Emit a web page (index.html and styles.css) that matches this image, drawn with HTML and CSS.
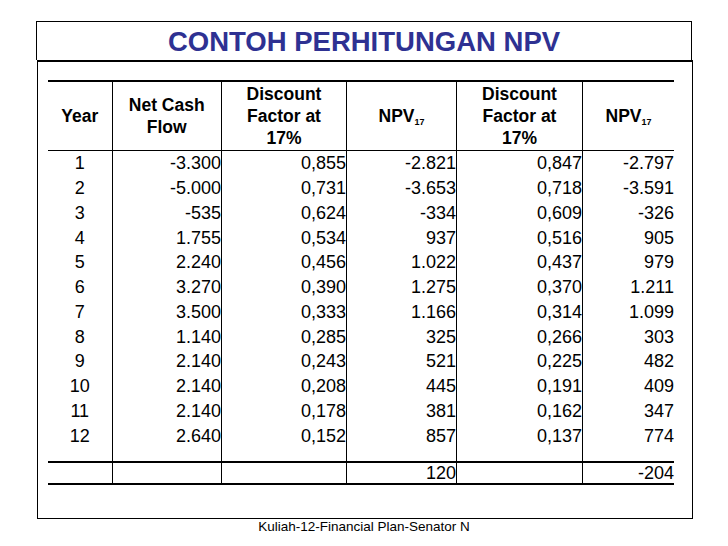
FILE: index.html
```html
<!DOCTYPE html>
<html>
<head>
<meta charset="utf-8">
<link rel="stylesheet" href="styles.css">
</head>
<body>
<div class="slide">
  <div class="title-box"><h1 class="title">CONTOH PERHITUNGAN NPV</h1></div>
  <div class="content-box">
    <table class="npv">
      <colgroup>
        <col class="c-year"><col class="c-cash"><col class="c-df"><col class="c-npv"><col class="c-df2"><col class="c-npv2">
      </colgroup>
      <thead>
        <tr>
          <th>Year</th>
          <th>Net Cash<br>Flow</th>
          <th>Discount<br>Factor at<br>17%</th>
          <th>NPV<sub>17</sub></th>
          <th>Discount<br>Factor at<br>17%</th>
          <th>NPV<sub>17</sub></th>
        </tr>
      </thead>
      <tbody>
        <tr><td>1</td><td>-3.300</td><td>0,855</td><td>-2.821</td><td>0,847</td><td>-2.797</td></tr>
        <tr><td>2</td><td>-5.000</td><td>0,731</td><td>-3.653</td><td>0,718</td><td>-3.591</td></tr>
        <tr><td>3</td><td>-535</td><td>0,624</td><td>-334</td><td>0,609</td><td>-326</td></tr>
        <tr><td>4</td><td>1.755</td><td>0,534</td><td>937</td><td>0,516</td><td>905</td></tr>
        <tr><td>5</td><td>2.240</td><td>0,456</td><td>1.022</td><td>0,437</td><td>979</td></tr>
        <tr><td>6</td><td>3.270</td><td>0,390</td><td>1.275</td><td>0,370</td><td>1.211</td></tr>
        <tr><td>7</td><td>3.500</td><td>0,333</td><td>1.166</td><td>0,314</td><td>1.099</td></tr>
        <tr><td>8</td><td>1.140</td><td>0,285</td><td>325</td><td>0,266</td><td>303</td></tr>
        <tr><td>9</td><td>2.140</td><td>0,243</td><td>521</td><td>0,225</td><td>482</td></tr>
        <tr><td>10</td><td>2.140</td><td>0,208</td><td>445</td><td>0,191</td><td>409</td></tr>
        <tr><td>11</td><td>2.140</td><td>0,178</td><td>381</td><td>0,162</td><td>347</td></tr>
        <tr><td>12</td><td>2.640</td><td>0,152</td><td>857</td><td>0,137</td><td>774</td></tr>
        <tr class="spacer"><td></td><td></td><td></td><td></td><td></td><td></td></tr>
        <tr class="total"><td></td><td></td><td></td><td>120</td><td></td><td>-204</td></tr>
      </tbody>
    </table>
  </div>
  <div class="footer">Kuliah-12-Financial Plan-Senator N</div>
</div>
</body>
</html>
```
FILE: styles.css
```css
* { box-sizing: border-box; }
html, body { margin: 0; padding: 0; background: #fff; }
body { font-family: "Liberation Sans", Arial, sans-serif; color: #000; }

.slide {
  padding: 21px 0 0 36px;
  width: 728px;
}

.title-box {
  width: 656px;
  height: 39px;
  border: 1px solid #000;
  border-bottom: none;
}
.title {
  margin: 0;
  font-size: 27.5px;
  line-height: 39px;
  font-weight: bold;
  color: #2e3192;
  text-align: center;
}

.content-box {
  width: 656px;
  height: 459px;
  margin-left: 1px;
  border: 1px solid #000;
  border-top: 2px solid #000;
  padding: 18px 0 0 10px;
}

.npv {
  border-collapse: separate;
  border-spacing: 0;
  table-layout: fixed;
  width: 626px;
}
.c-year { width: 63.5px; }
.c-cash { width: 109.5px; }
.c-df { width: 125px; }
.c-npv { width: 110px; }
.c-df2 { width: 126px; }
.c-npv2 { width: 92px; }

.npv th, .npv td { padding: 0; }
.npv th + th, .npv td + td { border-left: 1px solid #000; }

.npv th {
  height: 71px;
  border-top: 2px solid #000;
  border-bottom: 1px solid #000;
  font-size: 17.5px;
  line-height: 22px;
  font-weight: bold;
  text-align: center;
  vertical-align: middle;
}
.npv sub {
  font-size: 9px;
  vertical-align: -3px;
  line-height: 0;
}

.npv td {
  height: 24.75px;
  font-size: 18px;
  line-height: 20px;
  text-align: right;
  vertical-align: middle;
}
.npv td:first-child { text-align: center; }

.npv .spacer td { height: 12.6px; }
.npv .total td {
  height: 23px;
  border-top: 2px solid #000;
  border-bottom: 2px solid #000;
}

.footer {
  width: 656px;
  font-size: 13.5px;
  line-height: 15px;
  text-align: center;
}
```
